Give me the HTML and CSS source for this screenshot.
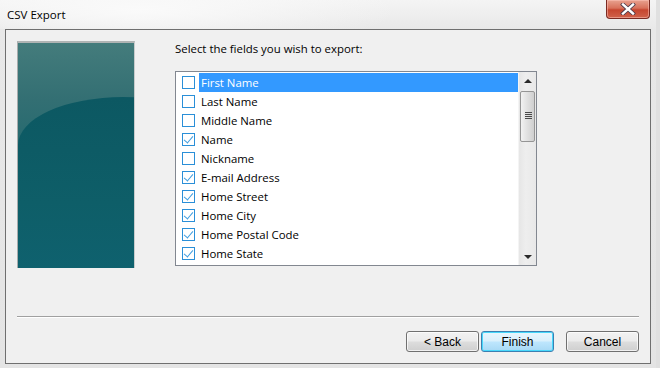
FILE: index.html
```html
<!DOCTYPE html>
<html>
<head>
<meta charset="utf-8">
<title>CSV Export</title>
<link rel="stylesheet" href="styles.css">
</head>
<body>
<div class="window">
  <div class="titlebar">
    <span class="title">CSV Export</span>
    <div class="close">
      <svg width="16" height="12" viewBox="0 0 16 12"><path d="M3 1.5 L13 10.5 M13 1.5 L3 10.5" stroke="#4a3a4a" stroke-width="4" stroke-linecap="square"/><path d="M3 1.5 L13 10.5 M13 1.5 L3 10.5" stroke="#ffffff" stroke-width="2.4" stroke-linecap="square"/></svg>
    </div>
  </div>
  <div class="client">
    <div class="main">
      <div class="side"><div class="arc"></div></div>
      <div class="content">
        <div class="label">Select the fields you wish to export:</div>
        <div class="listbox">
          <div class="rows">
            <div class="row selected"><span class="cb"></span><span class="txt">First Name</span></div>
            <div class="row"><span class="cb"></span><span class="txt">Last Name</span></div>
            <div class="row"><span class="cb"></span><span class="txt">Middle Name</span></div>
            <div class="row"><span class="cb on"></span><span class="txt">Name</span></div>
            <div class="row"><span class="cb"></span><span class="txt">Nickname</span></div>
            <div class="row"><span class="cb on"></span><span class="txt">E-mail Address</span></div>
            <div class="row"><span class="cb on"></span><span class="txt">Home Street</span></div>
            <div class="row"><span class="cb on"></span><span class="txt">Home City</span></div>
            <div class="row"><span class="cb on"></span><span class="txt">Home Postal Code</span></div>
            <div class="row"><span class="cb on"></span><span class="txt">Home State</span></div>
          </div>
          <div class="scrollbar">
            <div class="arrow up"></div>
            <div class="thumb"><span class="grip"></span></div>
            <div class="track"></div>
            <div class="arrow down"></div>
          </div>
        </div>
      </div>
    </div>
    <div class="sep"></div>
    <div class="buttons">
      <button class="btn">&lt; Back</button>
      <button class="btn default">Finish</button>
      <button class="btn cancel">Cancel</button>
    </div>
  </div>
</div>
</body>
</html>
```
FILE: styles.css
```css
html, body {
  margin: 0;
  padding: 0;
  background: #e9e9e9;
}
.window {
  width: 660px;
  height: 368px;
  display: flex;
  flex-direction: column;
  background: linear-gradient(to bottom, #f4f4f4 0px, #e8e8e8 30px, #e4e4e4 100%);
  box-sizing: border-box;
  border-right: 4px solid #e0e0e0;
  position: relative;
  overflow: hidden;
}
.titlebar {
  height: 29px;
  display: flex;
  align-items: flex-start;
  background: radial-gradient(ellipse 260px 40px at 140px 10px, #fafafa 0%, rgba(250,250,250,0) 100%);
}
.title {
  font-family: "Open Sans", "DejaVu Sans", sans-serif;
  font-size: 11.5px;
  color: #000;
  margin: 7px 0 0 7px;
  line-height: 16px;
}
.close {
  margin-left: auto;
  margin-right: 6px;
  width: 44px;
  height: 19px;
  box-sizing: border-box;
  border: 1px solid #7a2a22;
  border-top: none;
  border-radius: 0 0 4px 4px;
  background: linear-gradient(to bottom, #e8a290 0%, #d8715b 45%, #c6452f 55%, #d0624a 100%);
  display: flex;
  align-items: center;
  justify-content: center;
  box-shadow: inset 0 0 0 1px rgba(255,200,190,0.5);
}
.close svg { display: block; }
.client {
  flex: 1;
  margin: 0 5px 4px 5px;
  border: 1px solid #6f6f6f;
  background: #f0f0f0;
  padding: 11px 11px 0 11px;
  display: flex;
  flex-direction: column;
}
.main {
  display: flex;
  height: 227px;
}
.side {
  width: 118px;
  height: 227px;
  box-sizing: border-box;
  border-top: 2px solid #b0b4b4;
  border-left: 1px solid #a8acac;
  border-right: 1px solid #c8cccc;
  background: linear-gradient(to bottom, #447c7c 0%, #336f73 25%, #23696f 50%, #17687a 100%);
  position: relative;
  overflow: hidden;
}
.arc {
  position: absolute;
  left: 0;
  top: 54px;
  width: 210px;
  height: 300px;
  border-radius: 105px 105px 0 0 / 48px 48px 0 0;
  background: linear-gradient(to bottom, #0c5862 0%, #0e5e68 35%, #10677a 100%);
}
.content {
  margin-left: 40px;
  display: flex;
  flex-direction: column;
}
.label {
  font-family: "Open Sans", "DejaVu Sans", sans-serif;
  font-size: 11.4px;
  line-height: 15px;
  color: #000;
  margin-top: 0;
  height: 15px;
}
.listbox {
  margin-top: 15px;
  width: 362px;
  height: 195px;
  box-sizing: border-box;
  border: 1px solid #828790;
  background: #fff;
  display: flex;
}
.rows {
  flex: 1;
  padding-top: 1px;
}
.row {
  height: 19px;
  display: flex;
  align-items: center;
  font-family: "Open Sans", "DejaVu Sans", sans-serif;
  font-size: 11.4px;
  color: #000;
}
.cb {
  width: 13px;
  height: 13px;
  box-sizing: border-box;
  border: 1px solid #2a8fd8;
  background: #fff;
  margin-left: 6px;
  margin-right: 4px;
  position: relative;
  flex: none;
}
.cb.on::after {
  content: "";
  position: absolute;
  left: 3px;
  top: 0px;
  width: 4px;
  height: 8px;
  border-right: 1.5px solid #3f9de0;
  border-bottom: 1.5px solid #3f9de0;
  transform: rotate(40deg);
}
.txt {
  flex: 1;
  height: 19px;
  line-height: 19px;
  padding-left: 2px;
}
.row.selected .txt {
  background: #3399ff;
  color: #fff;
}
.scrollbar {
  width: 17px;
  background: linear-gradient(to right, #e6e6e6, #eeeeee 40%, #e8e8e8);
  display: flex;
  flex-direction: column;
  border-left: 1px solid #f4f4f4;
}
.arrow {
  height: 18px;
  position: relative;
}
.arrow::after {
  content: "";
  position: absolute;
  left: 5px;
  width: 0;
  height: 0;
  border-left: 4px solid transparent;
  border-right: 4px solid transparent;
}
.arrow.up::after {
  top: 7px;
  border-bottom: 4px solid #2a2a2a;
}
.arrow.down::after {
  top: 8px;
  border-top: 4px solid #2a2a2a;
}
.thumb {
  margin: 1px 1px 0 1px;
  height: 51px;
  box-sizing: border-box;
  border: 1px solid #959595;
  border-radius: 2px;
  background: linear-gradient(to right, #f2f2f2, #e0e0e0 50%, #cfcfcf);
  position: relative;
}
.grip {
  position: absolute;
  left: 4px;
  top: 20px;
  width: 7px;
  height: 7px;
  background: repeating-linear-gradient(to bottom, #4a4a4a 0px, #4a4a4a 1px, transparent 1px, transparent 2px);
}
.track { flex: 1; }
.sep {
  margin-top: 48px;
  height: 1px;
  background: #a0a0a0;
  border-bottom: 1px solid #ffffff;
}
.buttons {
  display: flex;
  justify-content: flex-end;
  margin-top: 13px;
}
.btn {
  width: 73px;
  height: 21px;
  box-sizing: border-box;
  border: 1px solid #707070;
  border-radius: 3px;
  background: linear-gradient(to bottom, #f2f2f2 0%, #ebebeb 48%, #dddddd 52%, #cfcfcf 100%);
  font-family: "Liberation Sans", Arial, sans-serif;
  font-size: 12px;
  color: #000;
  padding: 0;
  margin-left: 2px;
  box-shadow: inset 0 0 0 1px rgba(255,255,255,0.7);
}
.btn.default {
  border-color: #3c7fb1;
  background: linear-gradient(to bottom, #eaf6fd 0%, #d9f0fc 48%, #bee6fd 52%, #a7d9f5 100%);
  box-shadow: inset 0 0 0 1px #48d8fb;
}
.btn.cancel {
  margin-left: 12px;
}
```
